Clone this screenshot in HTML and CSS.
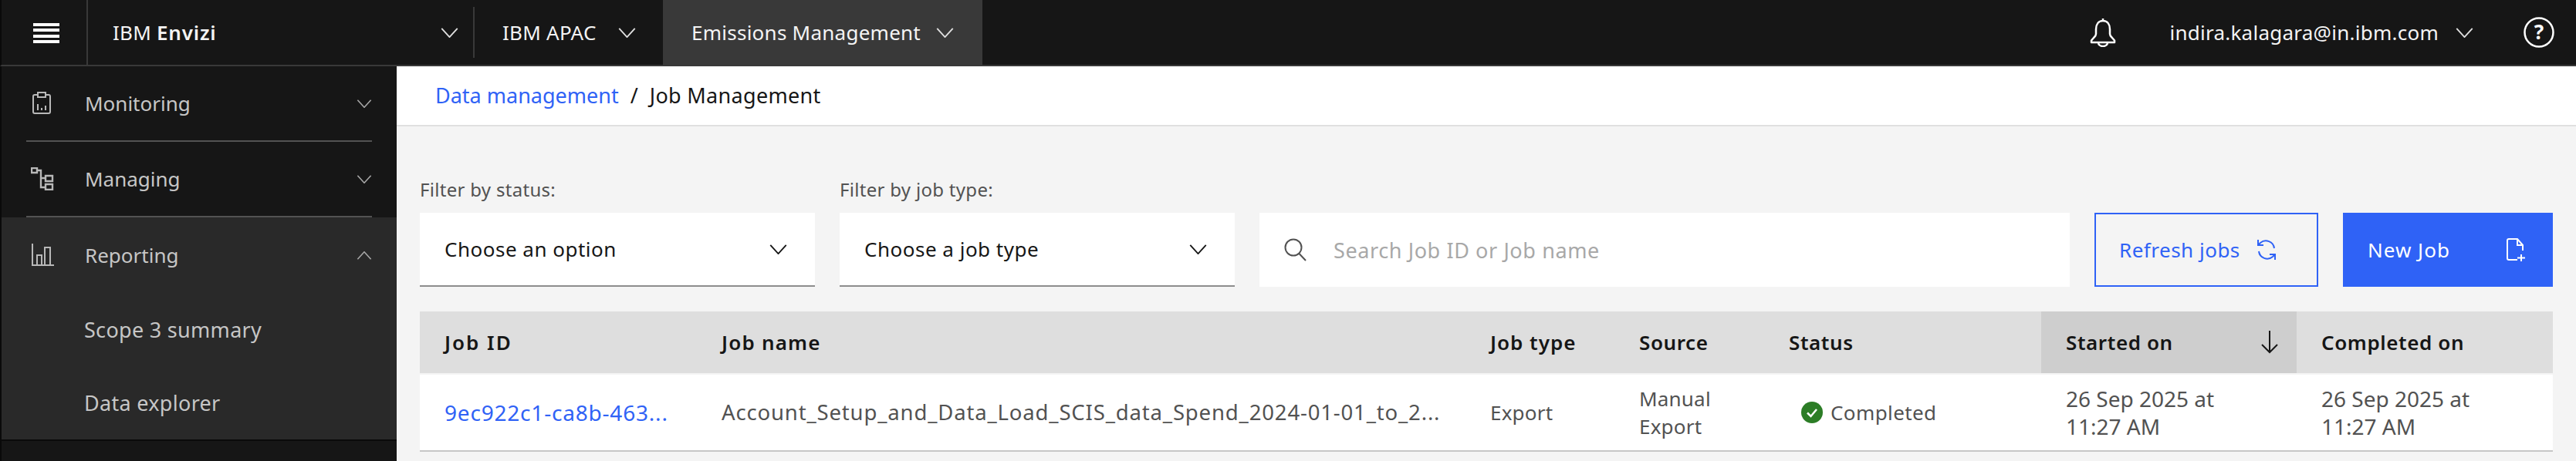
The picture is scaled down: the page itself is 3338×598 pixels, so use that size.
FILE: index.html
```html
<!DOCTYPE html>
<html lang="en">
<head>
  <meta charset="UTF-8">
  <meta name="viewport" content="width=device-width, initial-scale=1.0">
  <title>Job Management</title>
  <link rel="stylesheet" href="styles.css">
</head>
<body>
  <header class="topbar">
    <div class="menu-btn">
      <svg width="34" height="26" viewBox="0 0 34 26"><path fill="#fff" d="M0 0h34v4H0zM0 7h34v4H0zM0 15h34v4H0zM0 22h34v4H0z"/></svg>
    </div>
    <div class="brand">
      <span>IBM <b>Envizi</b></span>
      <svg class="chev" viewBox="0 0 24 14"><path d="M1 1l11 12L23 1"/></svg>
    </div>
    <div class="top-item account">
      <span>IBM APAC</span>
      <svg class="chev" viewBox="0 0 24 14"><path d="M1 1l11 12L23 1"/></svg>
    </div>
    <div class="top-item active">
      <span>Emissions Management</span>
      <svg class="chev" viewBox="0 0 24 14"><path d="M1 1l11 12L23 1"/></svg>
    </div>
    <div class="top-right">
      <svg class="bell" width="34" height="38" viewBox="0 0 34 38"><path fill="none" stroke="#fff" stroke-width="2.5" stroke-linejoin="round" d="M17 1v3M17 4c-6 0-9 5-9 11v6c0 2-1 3-2.500 4.500L2 29.500V32h30v-2.500L28.500 25.500C27 24 26 23 26 21v-6c0-6-3-11-9-11zM11 32c0 3 2.500 5 6 5s6-2 6-5"/></svg>
      <span class="email">indira.kalagara@in.ibm.com</span>
      <svg class="chev" viewBox="0 0 24 14"><path d="M1 1l11 12L23 1"/></svg>
      <svg class="help" width="40" height="40" viewBox="0 0 40 40"><circle cx="20" cy="20" r="18.500" fill="none" stroke="#fff" stroke-width="2.500"/><text x="20" y="29" text-anchor="middle" class="help-mark">?</text></svg>
    </div>
  </header>

  <div class="layout">
    <aside class="sidebar">
      <div class="nav-item">
        <svg class="nav-icon" width="30" height="30" viewBox="0 0 30 30"><path fill="none" stroke="#b8b8b8" stroke-width="2" d="M9 4H5a2 2 0 0 0-2 2v20a2 2 0 0 0 2 2h18a2 2 0 0 0 2-2V6a2 2 0 0 0-2-2h-4M9 1h10v6H9zM9 16v8M14 21v3M19 18v6"/></svg>
        <span>Monitoring</span>
        <svg class="chev side" viewBox="0 0 24 14"><path d="M1 1l11 12L23 1"/></svg>
      </div>
      <div class="nav-item">
        <svg class="nav-icon" width="30" height="30" viewBox="0 0 30 30"><path fill="none" stroke="#b8b8b8" stroke-width="2.400" d="M1 1h7v6H1zM8 4h5v22h6M13 14h6M19 11h9v7h-9zM19 22h9v7h-9z"/></svg>
        <span>Managing</span>
        <svg class="chev side" viewBox="0 0 24 14"><path d="M1 1l11 12L23 1"/></svg>
      </div>
      <div class="nav-group">
        <div class="nav-item open">
          <svg class="nav-icon" width="30" height="30" viewBox="0 0 30 30"><path fill="none" stroke="#b8b8b8" stroke-width="2" d="M2 0v28h28M8 28V15h6v13M18 28V5h7v23"/></svg>
          <span>Reporting</span>
          <svg class="chev side up" viewBox="0 0 24 14"><path d="M1 1l11 12L23 1"/></svg>
        </div>
        <div class="nav-sub">Scope 3 summary</div>
        <div class="nav-sub">Data explorer</div>
      </div>
    </aside>

    <main class="content">
      <nav class="crumbs">
        <a href="#">Data management</a>
        <span class="sep">/</span>
        <span class="crumb-now">Job Management</span>
      </nav>

      <div class="panel">
        <div class="toolbar">
          <div class="field">
            <label>Filter by status:</label>
            <div class="select">
              <span>Choose an option</span>
              <svg class="chev dark" viewBox="0 0 24 14"><path d="M1 1l11 12L23 1"/></svg>
            </div>
          </div>
          <div class="field">
            <label>Filter by job type:</label>
            <div class="select">
              <span>Choose a job type</span>
              <svg class="chev dark" viewBox="0 0 24 14"><path d="M1 1l11 12L23 1"/></svg>
            </div>
          </div>
          <div class="search">
            <svg width="30" height="30" viewBox="0 0 30 30"><path fill="none" stroke="#525252" stroke-width="2" d="M12 1.500a10.500 10.500 0 1 0 0 21 10.500 10.500 0 0 0 0-21zM19.500 20l8.500 9"/></svg>
            <span>Search Job ID or Job name</span>
          </div>
          <button class="btn btn-outline">
            <span>Refresh jobs</span>
            <svg width="26" height="28" viewBox="0 0 26 28"><path fill="none" stroke="#2f62f6" stroke-width="2" d="M23 12A11 11 0 0 0 5 5L2 8M2 1v7h7M3 16a11 11 0 0 0 18 7l3-3M24 27v-7h-7"/></svg>
          </button>
          <button class="btn btn-primary">
            <span>New Job</span>
            <svg width="26" height="30" viewBox="0 0 26 30"><path fill="none" stroke="#fff" stroke-width="2" d="M14 28H3a2 2 0 0 1-2-2V3a2 2 0 0 1 2-2h11l7 8v7M14 1v8h7M19 21v9M14 25.500h10"/></svg>
          </button>
        </div>

        <div class="table">
          <div class="row head">
            <div class="cell c-id">Job ID</div>
            <div class="cell c-name">Job name</div>
            <div class="cell c-type">Job type</div>
            <div class="cell c-source">Source</div>
            <div class="cell c-status">Status</div>
            <div class="cell c-start sorted">
              <span>Started on</span>
              <svg width="22" height="30" viewBox="0 0 22 30"><path fill="none" stroke="#161616" stroke-width="2" d="M11 0v28M1 18l10 10 10-10"/></svg>
            </div>
            <div class="cell c-end">Completed on</div>
          </div>
          <div class="row body">
            <div class="cell c-id"><a href="#">9ec922c1-ca8b-463...</a></div>
            <div class="cell c-name">Account_Setup_and_Data_Load_SCIS_data_Spend_2024-01-01_to_2...</div>
            <div class="cell c-type">Export</div>
            <div class="cell c-source">Manual<br>Export</div>
            <div class="cell c-status">
              <svg class="ok" width="28" height="28" viewBox="0 0 28 28"><circle cx="14" cy="14" r="14" fill="#2c7d26"/><path fill="none" stroke="#fff" stroke-width="2.500" d="M8 14.500l4.500 4.500L20 10"/></svg>
              <span>Completed</span>
            </div>
            <div class="cell c-start">26 Sep 2025 at<br>11:27 AM</div>
            <div class="cell c-end">26 Sep 2025 at<br>11:27 AM</div>
          </div>
        </div>
      </div>
    </main>
  </div>
</body>
</html>
```

FILE: styles.css
```css
* {
  box-sizing: border-box;
}
html, body {
  height: 598px;
  overflow: hidden;
}
body {
  margin: 0;
  background-color: #f4f4f4;
  font-family: "Noto Sans", Arial, sans-serif;
  font-size: 26px;
  color: #161616;
}
a {
  color: #2f62f6;
  text-decoration: none;
}

/* chevrons */
.chev {
  width: 23px;
  height: 13px;
  flex: none;
}
.chev path {
  fill: none;
  stroke: #e0e0e0;
  stroke-width: 2;
}
.chev.side {
  width: 20px;
  height: 11px;
}
.chev.side path {
  stroke: #a8a8a8;
}
.chev.up {
  transform: rotate(180deg);
}
.chev.dark path {
  stroke: #161616;
}

/* top bar */
.topbar {
  display: flex;
  align-items: stretch;
  height: 86px;
  background-color: #161616;
  border-bottom: 2px solid #393939;
  border-left: 2px solid #0a0a0a;
  color: #f4f4f4;
  letter-spacing: .25px;
}
.menu-btn {
  width: 112px;
  padding-left: 41px;
  display: flex;
  align-items: center;
  border-right: 2px solid #393939;
  margin-bottom: -2px;
}
.brand {
  width: 501px;
  padding: 0 21px 0 32px;
  display: flex;
  align-items: center;
  justify-content: space-between;
  position: relative;
}
.brand::after {
  content: "";
  position: absolute;
  right: 0;
  top: 9px;
  bottom: 9px;
  width: 2px;
  background-color: #393939;
}
.brand b {
  font-weight: 600;
  letter-spacing: .8px;
}
.top-item {
  display: flex;
  align-items: center;
}
.account {
  width: 244px;
  padding-left: 36px;
  gap: 28px;
}
.active {
  width: 414px;
  padding-left: 37px;
  gap: 20px;
  background-color: #393939;
}
.top-right {
  margin-left: auto;
  display: flex;
  align-items: center;
  padding-right: 28px;
}
.email {
  margin: 0 22px 0 69px;
}
.help {
  margin-left: 65px;
}
.help-mark {
  font-size: 26px;
  font-weight: 700;
  fill: #fff;
}

/* sidebar */
.layout {
  display: flex;
  height: 512px;
}
.sidebar {
  width: 514px;
  flex: none;
  background-color: #161616;
  border-left: 2px solid #0a0a0a;
  color: #c6c6c6;
}
.nav-item {
  height: 98px;
  margin-left: 32px;
  width: 448px;
  padding: 0 0 0 6px;
  display: flex;
  align-items: center;
  border-bottom: 2px solid #525252;
}
.nav-icon {
  flex: none;
}
.nav-item span {
  margin-left: 40px;
}
.nav-item .chev {
  margin-left: auto;
}
.nav-group {
  background-color: #292929;
  height: 290px;
  border-bottom: 2px solid #0a0a0a;
}
.nav-item.open {
  border-bottom: 0;
}
.nav-sub {
  height: 95px;
  padding-left: 107px;
  display: flex;
  align-items: center;
  font-size: 27px;
  letter-spacing: .3px;
}

/* main */
.content {
  flex: 1;
  min-width: 0;
}
.crumbs {
  height: 78px;
  padding: 0 0 2px 50px;
  display: flex;
  align-items: center;
  background-color: #fff;
  border-bottom: 2px solid #e0e0e0;
  font-size: 27px;
}
.sep {
  margin: 0 15px;
}
.crumb-now {
  letter-spacing: .3px;
}
.panel {
  padding: 0 30px 0 30px;
}
.toolbar {
  display: flex;
  align-items: flex-end;
  height: 208px;
}
.field {
  width: 512px;
  margin-right: 32px;
}
.field label {
  display: block;
  margin-bottom: 14px;
  font-size: 24px;
  letter-spacing: .3px;
  color: #525252;
}
.select {
  height: 96px;
  padding: 0 36px 0 32px;
  display: flex;
  align-items: center;
  justify-content: space-between;
  background-color: #fff;
  border-bottom: 2px solid #8d8d8d;
  letter-spacing: .5px;
}
.search {
  width: 1050px;
  height: 96px;
  padding-left: 32px;
  display: flex;
  align-items: center;
  gap: 34px;
  background-color: #fff;
  color: #a8a8a8;
  font-size: 27px;
  letter-spacing: .6px;
}
.btn {
  height: 96px;
  display: flex;
  align-items: center;
  font-family: inherit;
  font-size: 26px;
  cursor: pointer;
}
.btn-outline {
  width: 290px;
  margin-left: 32px;
  padding: 0 0 0 30px;
  gap: 21px;
  background-color: #f4f4f4;
  border: 2px solid #2f62f6;
  color: #2f62f6;
  letter-spacing: .5px;
}
.btn-primary {
  width: 272px;
  margin-left: 32px;
  padding: 0 34px 0 32px;
  justify-content: space-between;
  background-color: #2f62f6;
  border: 0;
  color: #fff;
  letter-spacing: 1px;
}

/* table */
.table {
  margin-top: 32px;
  background-color: #fff;
}
.row {
  display: flex;
}
.cell {
  display: flex;
  align-items: center;
  padding: 0 32px;
}
.c-id { width: 359px; }
.c-name { width: 996px; }
.c-type { width: 193px; }
.c-source { width: 194px; }
.c-status { width: 359px; }
.c-start { width: 331px; }
.c-end { width: 332px; }
.head {
  height: 82px;
  border-bottom: 2px solid #f4f4f4;
  background-color: #dedede;
  font-weight: 600;
  letter-spacing: .6px;
}
.head .c-id {
  letter-spacing: 2px;
}
.head .c-name {
  letter-spacing: 1.200px;
}
.head .c-type {
  letter-spacing: 1px;
}
.sorted {
  justify-content: space-between;
  background-color: #cecece;
  padding-right: 24px;
}
.body {
  height: 100px;
  border-bottom: 2px solid #c6c6c6;
  color: #525252;
  line-height: 36px;
}
.body .c-id {
  font-size: 28px;
  letter-spacing: .8px;
}
.body .c-name {
  font-size: 27.500px;
  letter-spacing: .85px;
}
.body .c-type,
.body .c-source {
  letter-spacing: .2px;
}
.body .c-start,
.body .c-end {
  font-size: 28px;
}
.c-status .ok {
  margin: 0 10px 0 16px;
  flex: none;
}
.c-status span {
  letter-spacing: .4px;
}
```
